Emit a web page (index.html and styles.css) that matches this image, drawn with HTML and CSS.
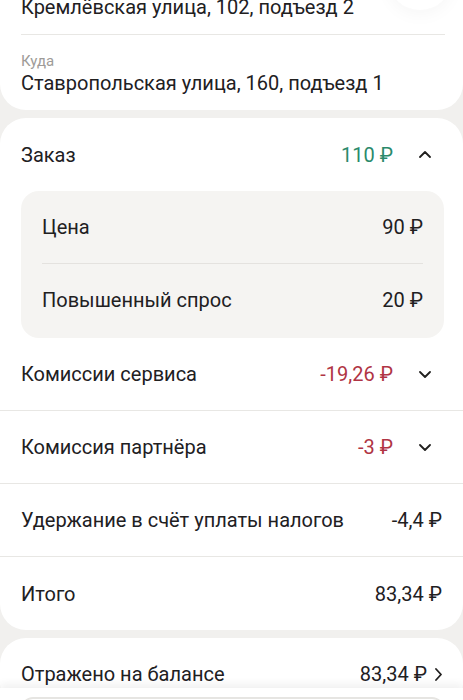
FILE: index.html
```html
<!DOCTYPE html>
<html lang="ru">
<head>
    <meta charset="UTF-8">
    <meta name="viewport" content="width=device-width, initial-scale=1.0">
    <title>Детали заказа</title>
    <link rel="stylesheet" href="styles.css">
</head>
<body>

<div class="screen">
    <!-- Route -->
    <div class="card route">
        <div class="route-point">
            <div class="label">Откуда</div>
            <div class="address">Кремлёвская улица, 102, подъезд 2</div>
        </div>
        <div class="route-point">
            <div class="label">Куда</div>
            <div class="address">Ставропольская улица, 160, подъезд 1</div>
        </div>
    </div>

    <!-- Breakdown -->
    <div class="card breakdown">
        <div class="row">
            <span class="name">Заказ</span>
            <span class="sum green">110 ₽</span>
            <svg class="chev" viewBox="0 0 12 7"><path d="M1 6 6 1l5 5"/></svg>
        </div>

        <div class="details">
            <div class="row sub">
                <span class="name">Цена</span>
                <span class="sum">90 ₽</span>
            </div>
            <div class="row sub">
                <span class="name">Повышенный спрос</span>
                <span class="sum">20 ₽</span>
            </div>
        </div>

        <div class="row line">
            <span class="name">Комиссии сервиса</span>
            <span class="sum red">-19,26 ₽</span>
            <svg class="chev" viewBox="0 0 12 7"><path d="M1 1l5 5 5-5"/></svg>
        </div>
        <div class="row line">
            <span class="name">Комиссия партнёра</span>
            <span class="sum red">-3 ₽</span>
            <svg class="chev" viewBox="0 0 12 7"><path d="M1 1l5 5 5-5"/></svg>
        </div>
        <div class="row line">
            <span class="name">Удержание в счёт уплаты налогов</span>
            <span class="sum">-4,4 ₽</span>
        </div>
        <div class="row">
            <span class="name">Итого</span>
            <span class="sum">83,34 ₽</span>
        </div>
    </div>

    <!-- Balance -->
    <div class="card balance">
        <div class="row">
            <span class="name">Отражено на балансе</span>
            <span class="sum">83,34 ₽</span>
            <svg class="chev right" viewBox="0 0 7 13"><path d="M1 1l5 5.5L1 12"/></svg>
        </div>
    </div>
</div>

<!-- floating round button, mostly scrolled off -->
<div class="float-btn"></div>

<!-- Bottom sheet peeking over the list -->
<div class="bottom-bar">
    <div class="bottom-button"></div>
</div>

</body>
</html>
```

FILE: styles.css
```css
/* Basic Reset */
* {
    margin: 0;
    padding: 0;
    box-sizing: border-box;
}
body {
    font-family: Roboto, "Noto Sans", sans-serif;
    background: #f1f0ee;
    color: #21201f;
    height: 700px;
    overflow: hidden;
}
/* page is scrolled a bit */
.screen {
    margin-top: -37px;
    display: flex;
    flex-direction: column;
    gap: 8px;
}
/* Cards */
.card {
    background: #fff;
    border-radius: 26px;
}
.route {
    padding: 0 18px 15px 21px;
}
.route-point {
    padding-top: 13px;
}
.route-point + .route-point {
    border-top: 1px solid #e8e7e4;
    margin-top: 15px;
    padding-top: 17px;
}
.label {
    font-size: 15px;
    line-height: 18px;
    color: #9e9b98;
}
.address {
    font-size: 20px;
    line-height: 24px;
    margin-top: 1px;
}
/* Rows */
.row {
    display: flex;
    align-items: center;
    height: 73px;
    padding: 0 21px;
    font-size: 20px;
}
.row .name {
    flex: 1;
}
.row .sum {
    white-space: nowrap;
}
.green {
    color: #2a8a6b;
}
.red {
    color: #b03444;
}
.chev {
    flex: none;
    width: 12px;
    height: 7px;
    margin-left: 26px;
    margin-right: 11px;
    fill: none;
    stroke: #21201f;
    stroke-width: 1.8;
    stroke-linecap: round;
    stroke-linejoin: round;
}
.chev.right {
    width: 7px;
    height: 13px;
    margin-left: 8px;
    margin-right: 0;
}
.line {
    border-bottom: 1px solid #e8e7e4;
}
/* Order details */
.details {
    background: #f5f4f2;
    border-radius: 18px;
    margin: 0 19px 0 21px;
    padding: 0 21px 3px;
}
.details .sub {
    height: 72px;
    padding: 0;
}
.details .sub + .sub {
    border-top: 1px solid #e4e2df;
}
.balance .row {
    height: 72px;
}
/* Floating button */
.float-btn {
    position: fixed;
    left: 388px;
    top: -54px;
    width: 64px;
    height: 64px;
    border-radius: 50%;
    background: #fff;
    box-shadow: 0 4px 18px rgba(0, 0, 0, 0.04);
}
/* Bottom sheet */
.bottom-bar {
    position: fixed;
    left: 0;
    right: 0;
    top: 688px;
    height: 40px;
    background: #fff;
    box-shadow: 0 -4px 8px rgba(0, 0, 0, 0.06);
    padding: 9px 19px 0 21px;
}
.bottom-button {
    height: 40px;
    border: 2px solid #e6e5e2;
    border-bottom: none;
    border-radius: 12px 12px 0 0;
}
```
